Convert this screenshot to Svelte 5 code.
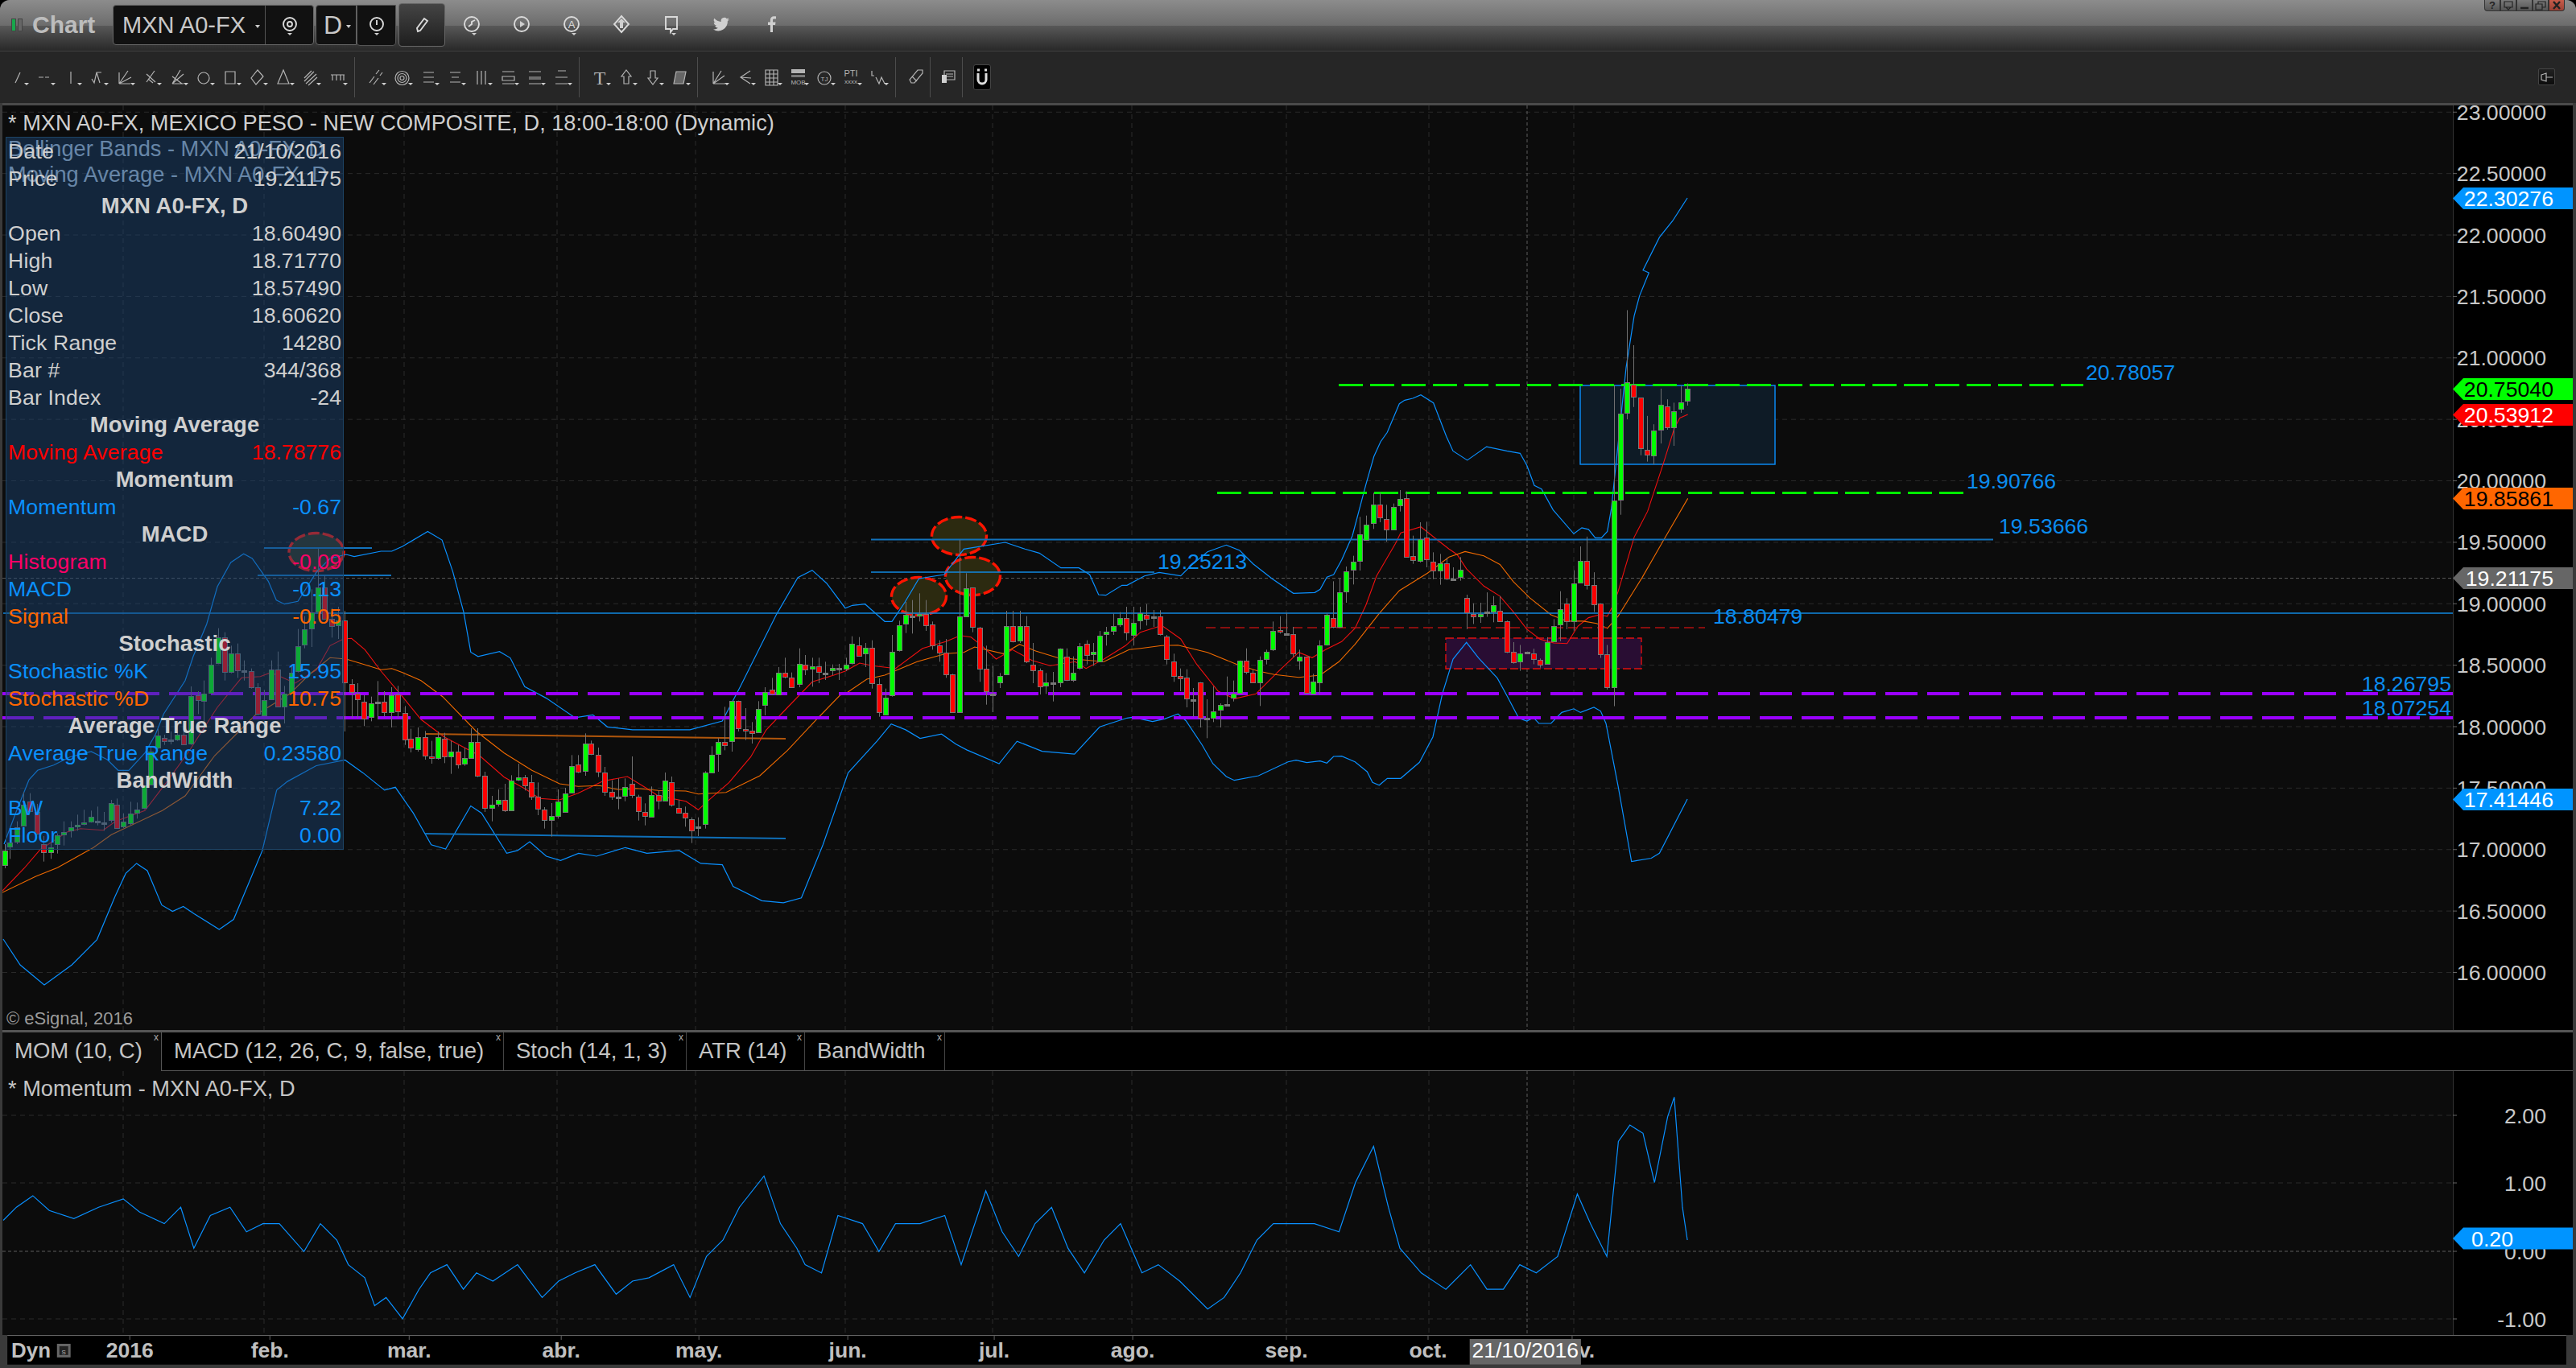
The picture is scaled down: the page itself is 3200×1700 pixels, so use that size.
<script>
  // zoom crops were read as x0, sx, y0, sy -> page pixels
  const maps = {
    a: [0, 1, 0, 1],
    o: [0, 0.48995, 0, 0.48995],
    z3: [0, 3, 560, 3],
    z4: [1800, 3, 340, 2.8],
    z9: [1050, 2.24, 600, 3],
    z10: [500, 2.613, 820, 3],
    z11: [0, 1.12, 640, 2.8],
    z12: [1400, 3, 480, 3]
  };
  const mx = (k, x) => maps[k][0] + x / maps[k][1];
  const my = (k, y) => maps[k][2] + y / maps[k][3];

  function line(...segs) {
    const out = [];
    for (const [k, s] of segs) {
      for (const p of s.trim().split(/\s+/)) {
        const [x, y] = p.split(",").map(Number);
        out.push(mx(k, x).toFixed(1) + "," + my(k, y).toFixed(1));
      }
    }
    return out.join(" ");
  }

  const upper = line(
    ["z3", "15,1470 60,1350 108,1230 140,1195 200,1175 260,1145 340,1125 400,1155 440,1195 480,1195 540,1130 580,1060 610,985 690,860 720,770 770,650 810,510 860,420 908,388 940,405 1000,490 1030,560 1060,575 1110,565 1180,455 1230,405 1290,390 1320,398 1420,378 1460,378 1500,360"],
    ["z11", "595,60 615,90 630,200 645,340 655,480 665,495 695,478 710,500 730,600 760,640 800,708 825,698 845,740 880,750 960,750 1005,720 1030,600 1080,350 1110,220 1130,195 1150,240"],
    ["z9", "0,470 20,460 55,455 110,520 130,520 165,450 205,360 275,345 330,250 445,225 500,250 540,265 600,320 650,320 680,345 705,420 725,422 770,385"],
    ["z12", "0,745 65,710 120,697 200,710 240,670 300,620 370,595 420,615 470,665 540,720 620,775 700,772 720,760 745,715 770,705 800,650 840,560 890,370 920,265 945,210 970,175 1015,68 1035,55 1065,48 1095,35 1142,65 1190,190"],
    ["z4", "15,620 68,652 140,605 215,620 265,628 290,670 318,740 345,752 388,825 465,908 495,887 520,893 545,922 568,922 590,900 605,820 660,330 690,150 710,80 745,0"],
    ["o", "1000,165 1010,145 1018,135 1027,121"]
  );

  const lower = line(
    ["a", "4,1168 25,1200 55,1225"],
    ["z11", "100,1568 135,1480 160,1330 175,1250 190,1215 205,1240 225,1360 240,1382 255,1365 270,1390 305,1445 325,1410 350,1260 365,1170 385,960 400,930 440,875 480,855 505,900 535,960 550,950 575,1040 600,1150 620,1165 655,1015 670,1040 705,1180 720,1170 737,1140 760,1190 780,1205 805,1180 830,1190 870,1160 900,1180 945,1170 975,1215 1005,1220 1020,1295 1060,1345 1090,1352 1115,1335 1145,1150 1180,900 1220,790 1240,730 1260,750 1280,780 1310,765 1330,800 1345,820 1390,868 1415,790 1450,825 1495,835 1530,740"],
    ["z12", "0,1240 20,1237 95,1253 140,1243 190,1225 220,1250 280,1340 320,1410 370,1458 400,1472 490,1455 600,1403 630,1397 670,1406 720,1400 745,1408 770,1383 800,1382 850,1403 895,1440 915,1480 940,1490 970,1465 1020,1465 1090,1405 1140,1310 1175,1150 1215,1020 1265,958"],
    ["z4", "110,1340 180,1410 215,1470 260,1550 290,1560 315,1548 335,1568 380,1568 420,1530 465,1517 490,1530 540,1512 565,1525 585,1568"],
    ["o", "985,480 993,525 1005,523 1010,520 1027,487"]
  );

  const maRed = line(
    ["a", "3,1108"],
    ["z3", "90,1560 150,1490 250,1425 300,1412 385,1418 430,1385 540,1345 620,1240 700,1130 810,960 900,850 970,845 1010,830 1100,870 1180,820 1230,730 1280,705 1310,703 1360,745 1420,825 1500,920"],
    ["z10", "60,225 135,290 250,360 330,440 400,485 445,520 510,525 570,500 650,455 730,438 790,480 830,510 920,530 960,562 1000,520 1060,460 1130,365 1180,265 1250,180 1330,85 1400,60"],
    ["z9", "0,705 40,675 75,685 140,695 215,620 280,595 320,572 350,578 380,610 420,660 465,625 520,665 570,685 640,670 670,695 720,660 780,610"],
    ["z12", "50,920 130,895 200,945 260,1040 340,1140 400,1168 480,1150 560,1070 640,995 690,1015 740,985 800,955 850,905 890,820 930,710 1000,590 1020,550 1095,527 1200,610"],
    ["z4", "30,980 65,1030 130,1090 190,1125 240,1180 290,1240 340,1275 390,1288 440,1290 480,1230 520,1200 560,1190 590,1195 610,1160 630,1110 690,920 740,830 800,660 840,540 860,505 890,493"]
  );

  const maOrange = line(
    ["a", "3,1110"],
    ["z11", "50,1260 80,1230 130,1160"],
    ["z3", "415,1435 605,1345 690,1290 800,1140 950,990 1080,910 1150,840 1230,775 1290,780 1340,795 1420,820 1460,815 1500,830"],
    ["z10", "60,80 130,140 240,270 330,350 420,415 510,465 570,475 640,472 700,487 760,482 830,490 920,492 960,503 1050,497 1160,435 1250,340 1340,230 1420,135"],
    ["z9", "0,790 60,735 110,720 200,670 280,640 330,635 360,615 440,640 485,605 530,630 590,655 720,670 790,625"],
    ["z12", "50,980 130,970 190,968 300,995 410,1040 490,1065 550,1078 640,1088 720,1080 790,1030 850,965 940,850 1015,765 1120,700 1200,640"],
    ["z4", "60,970 130,985 190,1015 240,1075 300,1130 380,1190 440,1212 500,1212 550,1220 590,1237 630,1195 720,1060 800,930 890,785"]
  );

  const momentum = line(["o", "2,743 10,735 20,728 30,737 45,742 60,735 75,730 85,738 100,745 110,735 118,760 128,740 140,735 150,750 160,745 170,745 185,762 195,745 205,755 212,770 222,778 228,795 235,790 245,803 255,785 262,775 272,770 282,785 290,775 300,780 315,770 330,790 340,780 350,775 362,770 375,788 385,780 395,778 410,770 420,790 430,765 440,755 450,735 465,716 475,745 485,760 490,770 500,775 510,740 525,745 535,762 545,745 560,745 575,740 585,770 600,725 610,750 620,765 630,745 640,735 650,760 660,775 672,755 682,745 695,775 705,770 718,780 735,797 745,790 755,775 765,755 775,745 785,745 800,745 815,750 825,720 836,698 845,735 852,760 865,775 880,785 895,770 905,785 915,785 925,770 935,775 948,765 960,727 968,745 978,765 985,695 992,685 1000,690 1007,720 1015,680 1019,668 1024,735 1027,755"]);

  // candle rows: x top bottom high low colour, in crop units
  const rows = [
    ["z3", `17 1495 1548 1470 1560 g;37 1465 1480 1455 1525 g;63 1408 1463 1385 1470 g;88 1322 1400 1275 1405 g;112 1312 1348 1280 1350 r;137 1350 1430 1320 1435 r;163 1470 1500 1440 1535 r;188 1482 1500 1465 1525 g;212 1437 1470 1430 1505 g;238 1424 1432 1385 1475 g;263 1408 1420 1385 1445 g;288 1398 1404 1360 1420 g;313 1390 1396 1342 1400 g;338 1367 1386 1345 1390 g;362 1382 1385 1330 1400 d;387 1388 1391 1350 1420 d;413 1318 1382 1305 1390 g;436 1322 1408 1300 1412 r;460 1387 1405 1355 1410 g;487 1355 1390 1312 1400 g;511 1340 1352 1315 1375 g;536 1252 1336 1250 1340 g;562 1125 1248 1105 1250 g;587 1065 1110 1040 1115 g;611 1075 1087 1062 1100 r;636 1080 1083 1050 1098 d;661 1062 1080 1030 1085 g;685 1062 1098 1030 1100 r;710 918 1096 882 1100 g;737 916 934 900 985 r;760 908 936 860 1020 g;785 800 906 775 908 g;812 700 797 665 799 g;836 700 828 680 860 r;860 760 828 730 833 g;884 760 822 722 850 r;910 822 825 785 860 d;935 825 886 815 890 r;960 886 985 870 990 r;985 932 990 895 993 g;1010 818 930 785 932 g;1034 818 955 752 960 r;1060 908 955 880 1020 g;1085 830 906 800 910 g;1109 732 826 668 830 g;1133 668 726 620 740 g;1160 605 664 520 735 g;1185 512 603 368 610 g;1209 512 628 470 630 r;1235 630 657 590 700 r;1260 636 655 585 705 g;1285 635 865 600 1050 r;1310 872 903 855 1000 r;1333 908 930 870 1000 r;1357 938 1000 915 1030 r;1384 944 995 920 1012 g;1408 940 943 862 1005 d;1432 940 978 900 995 r;1457 914 976 885 1035 g;1482 912 975 880 1000 r`],
    ["z10", `7 200 300 175 320 r;27 298 332 260 348 r;50 292 338 255 345 g;72 292 362 268 375 r;93 364 370 305 390 r;116 292 370 270 375 g;137 296 362 275 388 r;158 344 362 305 428 g;179 344 392 320 408 r;202 370 392 330 398 g;223 308 368 258 372 g;244 308 434 258 440 r;267 436 557 420 570 r;289 542 553 510 605 g;310 526 542 486 550 g;333 526 564 465 570 r;354 452 563 433 563 g;375 442 452 390 455 g;396 442 472 432 490 r;419 460 514 432 525 r;440 514 559 460 582 r;461 562 601 552 632 r;484 584 598 537 662 g;505 532 586 486 595 g;527 500 568 480 570 g;550 398 497 358 498 g;570 394 421 358 425 r;592 314 417 277 435 g;612 314 352 304 358 r;636 358 420 330 440 r;657 422 493 402 510 r;679 494 511 452 525 r;701 514 517 445 560 d;722 478 510 445 530 g;744 466 508 363 518 r;766 514 568 506 602 r;787 571 587 538 620 r;808 508 589 475 590 g;830 508 528 490 560 r;852 452 526 423 527 g;874 460 544 438 550 r;895 554 571 525 572 r;918 574 592 550 625 r;939 596 637 590 686 r;960 625 628 590 660 d;983 424 616 418 632 g;1004 358 424 325 425 g;1025 310 355 295 420 g;1046 310 322 178 340 r;1070 157 306 157 345 g;1090 157 260 155 270 r;1112 260 265 183 302 r;1134 268 277 235 315 r;1156 187 274 157 275 g;1177 122 169 105 210 g;1200 115 130 70 135 r;1221 50 130 30 132 g;1242 50 64 -5 72 r;1263 68 103 50 105 r;1287 18 94 -40 105 g;1307 20 37 -15 60 r;1329 28 37 -5 103 g;1351 28 48 -5 90 r;1373 52 55 10 78 d;1396 34 44 20 60 g;1417 34 37 18 78 d;1439 20 34 -5 45 g`],
    ["z9", `18 604 676 575 680 g;37 608 646 578 650 r;57 617 637 600 690 g;75 617 748 590 770 r;93 752 856 732 875 r;113 803 865 770 870 g;131 632 795 570 800 g;149 533 625 517 632 g;169 496 529 447 563 g;187 498 502 440 565 d;205 491 496 415 520 g;225 491 532 440 555 r;243 530 607 520 625 r;261 608 634 590 670 r;279 635 715 585 730 r;299 718 858 715 860 r;317 500 858 215 860 g;335 395 500 340 503 g;354 394 540 394 560 r;373 542 694 540 745 r;391 695 780 610 830 r;411 790 793 685 858 d;429 724 748 712 768 g;447 538 718 480 720 g;465 536 592 480 598 r;485 538 592 480 600 g;503 538 670 500 675 r;521 680 700 600 750 r;541 703 762 695 792 r;558 748 760 712 790 g;577 748 751 708 818 d;597 622 748 620 765 g;615 650 738 620 742 r;633 710 736 650 745 g;651 612 694 600 700 g;671 604 646 590 680 r;689 634 644 600 685 g;707 572 667 555 670 g;726 559 568 540 610 g;745 538 556 490 570 g;764 508 532 485 540 g;782 508 562 465 590 r;801 524 568 465 610 g;819 490 516 465 550 g;837 494 508 455 535 r;857 500 505 477 540 d;875 500 565 478 572 r;893 575 660 570 680 r;913 668 722 640 745 r;931 722 730 695 780 r;949 730 808 698 840 r;968 811 815 768 875 d;987 746 878 746 915 r;1005 878 881 810 955 d;1023 854 877 762 895 g;1043 832 850 825 915 g;1061 828 832 725 830 d;1079 788 803 740 818 g;1098 665 785 665 790 g;1116 665 706 620 716 r;1134 710 745 700 750 r;1154 662 745 650 835 g;1172 632 658 625 680 g;1190 555 625 520 630 g;1209 551 558 500 565 r;1228 563 567 488 570 d;1246 566 637 540 652 r;1264 652 667 625 700 g;1284 652 788 650 790 r;1302 745 790 715 792 g;1320 608 745 590 790 g;1340 494 605 490 610 g;1358 508 542 370 545 r;1376 410 540 360 545 g;1394 332 406 315 450 g;1414 298 328 275 382 g;1432 196 295 130 330 g;1450 158 214 125 215 g;1470 85 155 40 175 g;1488 85 132 40 150 r;1506 137 176 85 222 r;1526 92 176 80 178 g;1544 62 85 30 110 g`],
    ["z12", `1042 419 637 395 640 r;1066 637 652 560 665 r;1093 572 652 510 660 g;1117 568 648 508 678 r;1141 658 690 622 722 r;1168 664 692 628 743 g;1192 662 720 642 725 r;1216 719 722 678 722 d;1243 688 716 640 728 g`],
    ["z4", `67 1132 1183 1120 1240 r;91 1186 1195 1150 1222 r;118 1187 1195 1148 1218 g;142 1180 1183 1112 1197 d;166 1155 1178 1125 1216 g;190 1175 1210 1125 1215 r;217 1213 1318 1210 1323 r;241 1320 1356 1285 1360 r;265 1323 1352 1295 1385 g;290 1320 1323 1318 1326 d;316 1323 1342 1308 1362 r;340 1346 1364 1342 1374 r;367 1285 1360 1268 1362 g;391 1228 1281 1205 1282 g;415 1170 1224 1108 1282 g;439 1150 1212 1132 1240 r;466 1080 1212 1035 1245 g;490 1001 1076 952 1078 g;514 1001 1084 918 1102 r;541 1086 1154 1042 1180 r;565 1150 1325 1150 1340 r;589 1328 1443 1295 1450 r;616 793 1443 390 1508 g;640 491 790 403 842 g;664 380 485 130 510 g;688 390 432 252 467 r;715 435 610 435 635 r;739 615 631 498 657 r;763 548 634 527 667 g;790 458 544 403 594 g;814 466 538 440 546 r;838 481 538 452 602 g;865 450 471 392 487 g;889 404 446 385 462 g`]
  ];

  const candles = [];
  for (const [k, s] of rows) {
    for (const row of s.split(";")) {
      const [x, t, b, h, l, c] = row.trim().split(" ");
      const cx = Math.round(mx(k, +x)) + 0.5;
      const top = my(k, +t), bot = my(k, +b);
      candles.push({
        cx, top: Math.round(top) + 0.5, h: Math.max(2, Math.round(bot - top)),
        hi: my(k, Math.min(+h, +t)), lo: my(k, Math.max(+l, +b)), c
      });
    }
  }

  const priceY = (p) => 904 - (p - 18) * 152.74;
  const prices = [23, 22.5, 22, 21.5, 21, 20.5, 20, 19.5, 19, 18.5, 18, 17.5, 17, 16.5, 16];
  const vGrid = [153, 328, 502, 692, 864, 1050, 1233, 1406, 1598, 1775, 1955];
  const months = [
    ["2016", 153], ["feb.", 328], ["mar.", 502], ["abr.", 692], ["may.", 864], ["jun.", 1050],
    ["jul.", 1233], ["ago.", 1406], ["sep.", 1598], ["oct.", 1775], ["nov.", 1957]
  ];
  const tags = [
    { t: "22.30276", y: 247.5, bg: "#0094ff", fg: "#fff" },
    { t: "20.75040", y: 484.5, bg: "#00ff00", fg: "#000" },
    { t: "20.53912", y: 516.5, bg: "#ff0000", fg: "#fff" },
    { t: "19.85861", y: 620.5, bg: "#ff6600", fg: "#000" },
    { t: "19.21175", y: 719.5, bg: "#666666", fg: "#fff" },
    { t: "17.41446", y: 994.5, bg: "#0094ff", fg: "#fff" }
  ];
  const levels = [
    { t: "20.78057", x: 2591, y: 473 },
    { t: "19.90766", x: 2443, y: 608 },
    { t: "19.53666", x: 2483, y: 664 },
    { t: "19.25213", x: 1438, y: 708 },
    { t: "18.80479", x: 2128, y: 776 }
  ];
  const ellipses = [[1141.5, 742], [1208.5, 717], [1191.5, 667], [393, 687]];

  const infoRows = [
    { l: "Date", r: "21/10/2016" }, { l: "Price", r: "19.21175" }, { h: "MXN A0-FX, D" },
    { l: "Open", r: "18.60490" }, { l: "High", r: "18.71770" }, { l: "Low", r: "18.57490" },
    { l: "Close", r: "18.60620" }, { l: "Tick Range", r: "14280" }, { l: "Bar #", r: "344/368" },
    { l: "Bar Index", r: "-24" }, { h: "Moving Average" },
    { l: "Moving Average", r: "18.78776", c: "red" }, { h: "Momentum" },
    { l: "Momentum", r: "-0.67", c: "blue" }, { h: "MACD" },
    { l: "Histogram", r: "-0.09", c: "pink" }, { l: "MACD", r: "-0.13", c: "blue" },
    { l: "Signal", r: "-0.05", c: "orange" }, { h: "Stochastic" },
    { l: "Stochastic %K", r: "15.95", c: "blue" }, { l: "Stochastic %D", r: "10.75", c: "orange" },
    { h: "Average True Range" }, { l: "Average True Range", r: "0.23580", c: "blue" },
    { h: "BandWidth" }, { l: "BW", r: "7.22", c: "blue" }, { l: "Floor", r: "0.00", c: "blue" }
  ];

  const tabs = [
    { t: "MOM (10, C)", w: 198, on: true },
    { t: "MACD (12, 26, C, 9, false, true)", w: 425 },
    { t: "Stoch (14, 1, 3)", w: 227 },
    { t: "ATR (14)", w: 147 },
    { t: "BandWidth", w: 174 }
  ];

  // drawing tools, paths in a 22x24 box
  const groups = [
    [
      "M7 19L13 6", "M3 12H9M11 12H16", "M10 5V20", "M3 14L6 19L9 6H15M9 6L13 19",
      "M4 20L15 4M4 20L19 12M4 20H18M4 20V6", "M5 18L15 4M5 8L16 18M7 14L13 19",
      "M4 20L14 3M4 20L18 8M4 20H18M4 11L16 20", "M3 13a7 7 0 1 0 14 0a7 7 0 1 0 -14 0",
      "M4 5H16V20H4Z", "M11 3L18 11L9 21L3 13Z", "M10 3L17 20H3Z",
      "M3 17L15 5M5 20L18 8M3 13L12 4M8 22L19 12", "M3 9H20M5 9V16M10 9V16M15 9V16M19 9V16"
    ],
    [
      "M3 19L9 11M11 8L15 3M8 21L14 13M16 10L19 6",
      "M2 13a8.5 8.5 0 1 0 17 0a8.5 8.5 0 1 0 -17 0M5 13a5.5 5.5 0 1 0 11 0a5.5 5.5 0 1 0 -11 0M8 13a2.5 2.5 0 1 0 5 0a2.5 2.5 0 1 0 -5 0",
      "M4 6H17M4 12H17M4 18H17", "M4 6H17M6 12H15M4 18H17", "M5 4V21M10 4V21M15 4V21",
      "M3 5H18M3 11H18V16H3ZM3 20H18", "M3 5H18M3 12H18M3 14H18M3 20H18", "M6 4H16M3 12H18M3 20H18"
    ],
    ["T", "M10 3L16 11H13V20H7V11H4Z", "M7 4H13V13H16L10 21L4 13H7Z", "M6 5H18L15 20H3Z"],
    [
      "M4 20L14 4M4 20L18 10M4 20H19M4 20V5", "M17 4L5 12L17 20M5 12L18 13", "M3 3H18V22H3ZM3 8H18M3 13H18M3 18H18M8 3V22M13 3V22",
      "", "", "", "M3 4V10H6M8 12L12 20L15 12L19 20"
    ]
  ];
  const topIcons = ["chart", "play", "alert", "swap", "chat", "bird", "fb"];
</script>

<div class="win">
  <div class="title">
    <div class="leds"><i class="led on"></i><i class="led"></i></div>
    <div class="app">Chart</div>
    <div class="symbol">
      <div class="sym-name">MXN A0-FX<i class="tri"></i></div>
      <div class="sym-btn">
        <svg width="26" height="28" viewBox="0 0 26 28"><circle cx="13" cy="13" r="8" class="ic hi"/><circle cx="13" cy="13" r="3" class="ic hi"/><path d="M10 24h6l-3 3z" class="fill"/></svg>
      </div>
    </div>
    <div class="interval">D<i class="tri"></i></div>
    <div class="clock">
      <svg width="26" height="28" viewBox="0 0 26 28"><circle cx="13" cy="13" r="8" class="ic hi"/><path d="M13 8V14" class="ic hi"/><path d="M10 24h6l-3 3z" class="fill"/></svg>
    </div>
    <div class="pencil">
      <svg width="26" height="28" viewBox="0 0 26 28"><path d="M8 22L7 18L16 6L20 9L11 21Z" class="ic hi"/></svg>
    </div>
    {#each topIcons as ic}
      <div class="top-ic">
        <svg width="28" height="30" viewBox="0 0 28 30">
          {#if ic === "chart"}
            <circle cx="14" cy="14" r="9" class="ic hi"/><path d="M10 17L14 14L14 11L18 9" class="ic hi"/><path d="M14 25h6l-3 3z" class="fill"/>
          {:else if ic === "play"}
            <circle cx="14" cy="14" r="9" class="ic hi"/><path d="M12 10L18 14L12 18Z" class="fill"/>
          {:else if ic === "alert"}
            <circle cx="14" cy="14" r="9" class="ic hi"/><text x="14" y="19" class="ic-t">A</text><path d="M14 25h6l-3 3z" class="fill"/>
          {:else if ic === "swap"}
            <path d="M14 4L23 14L14 24L5 14Z" class="ic hi"/><path d="M14 7L19 12H16V19H12V12H9Z" class="fill"/>
          {:else if ic === "chat"}
            <path d="M7 5H21V20H16L13 24V20H7Z" class="ic hi"/><path d="M14 25h6l-3 3z" class="fill"/>
          {:else if ic === "bird"}
            <path transform="translate(2 2)" d="M22 5.9c-.7.3-1.5.5-2.4.6.9-.5 1.5-1.3 1.8-2.3-.8.5-1.7.8-2.6 1a4.1 4.1 0 0 0-7 3.7A11.6 11.6 0 0 1 3.4 4.7a4.1 4.1 0 0 0 1.3 5.5c-.7 0-1.3-.2-1.9-.5 0 2 1.4 3.7 3.3 4.1-.6.2-1.2.2-1.9.1.5 1.6 2 2.8 3.8 2.8A8.2 8.2 0 0 1 2 18.4a11.6 11.6 0 0 0 17.9-10.3c.8-.6 1.5-1.3 2.1-2.2z" class="fill"/>
          {:else}
            <path transform="translate(2 2)" d="M14 22v-9h3l.5-3.5H14V7.3c0-1 .3-1.7 1.8-1.7H18V2.4C17.6 2.4 16.5 2.3 15.3 2.3c-2.6 0-4.4 1.6-4.4 4.5v2.7H8V13h2.9v9z" class="fill"/>
          {/if}
        </svg>
      </div>
    {/each}
    <div class="caption">
      <span class="cap">?</span>
      <span class="cap"><svg width="14" height="12" viewBox="0 0 14 12"><path d="M2 1H12V8H2ZM7 11L4 8H10Z" class="dk"/></svg></span>
      <span class="cap"><svg width="14" height="12" viewBox="0 0 14 12"><path d="M2 9H12" class="dk thick"/></svg></span>
      <span class="cap"><svg width="14" height="12" viewBox="0 0 14 12"><path d="M1 4H9V11H1ZM4 4V1H13V8H9" class="dk"/></svg></span>
      <span class="cap close"><svg width="14" height="12" viewBox="0 0 14 12"><path d="M3 1L11 10M11 1L3 10" class="dk thick"/></svg></span>
    </div>
  </div>

  <div class="tools">
    {#each groups as group, g}
      {#each group as d, i}
        <div class="tool">
          <svg width="33" height="30" viewBox="0 0 33 30">
            <g transform="translate(6 3)">
              {#if g === 3 && i === 3}
                <rect x="2" y="2" width="17" height="5" class="solid"/><rect x="2" y="9" width="17" height="3" class="solid dim"/>
                <text x="10.5" y="21" class="mini">MOB</text>
              {:else if g === 3 && i === 4}
                <circle cx="10" cy="13" r="8" class="ic"/><text x="10" y="16.5" class="mini">TJ</text>
              {:else if g === 3 && i === 5}
                <text x="10" y="11" class="mini big">PTI</text><text x="10" y="20" class="mini">xxxx</text>
              {:else if d === "T"}
                <text x="10" y="21" class="letter">T</text>
              {:else}
                <path d={d} class:band={g === 2 && i === 3} class="ic"/>
              {/if}
            </g>
            <path d="M24 22h6l-3 3z" class="fill"/>
          </svg>
        </div>
      {/each}
      <i class="sep"></i>
    {/each}
    <div class="tool">
      <svg width="33" height="30" viewBox="0 0 33 30"><path d="M10 22L8 18L18 6H24L24 10L14 22ZM11 14L17 20" class="ic"/></svg>
    </div>
    <i class="sep tight"></i>
    <div class="tool">
      <svg width="33" height="30" viewBox="0 0 33 30"><path d="M11 7H24V18H11ZM13 11H22M13 14H22" class="ic"/><path d="M8 12H14V22H8Z" class="fill"/></svg>
    </div>
    <i class="sep tight"></i>
    <div class="magnet"><svg width="18" height="24" viewBox="0 0 18 24"><path d="M4 7V15a5 5 0 0 0 10 0V7" class="mag"/><path d="M3 3H6M12 3H15" class="mag"/></svg></div>
    <div class="pin">
      <svg width="18" height="18" viewBox="0 0 18 18"><path d="M2 6L8 4V14L2 12ZM8 9H16" class="ic"/></svg>
    </div>
  </div>
  <div class="rule"></div>

  <div class="row main">
    <div class="plot">
      <svg class="block" width="3044" height="1149" viewBox="3 132 3044 1149">
        {#each prices as p}
          <line x1="3" x2="3047" y1={priceY(p)} y2={priceY(p)} class="grid"/>
        {/each}
        {#each vGrid as x}
          <line x1={x} x2={x} y1="132" y2="1281" class="grid"/>
        {/each}
        <line x1="1897" x2="1897" y1="132" y2="1281" class="cross"/>
        <line x1="3" x2="3047" y1="719.6" y2="719.6" class="cross"/>

        <rect x="1963" y="480" width="242" height="98" class="box-blue"/>
        <rect x="1796" y="794" width="243" height="38" class="box-red"/>
        {#each ellipses as [cx, cy]}
          <ellipse {cx} {cy} rx="34" ry="23.5" class="oval"/>
        {/each}

        <polyline points={upper} class="bb"/>
        <polyline points={lower} class="bb"/>
        <polyline points={maRed} class="ma-r"/>
        <polyline points={maOrange} class="ma-o"/>

        <line x1="4" x2="3047" y1="763" y2="763" class="lvl"/>
        <line x1="1082" x2="2476" y1="671.5" y2="671.5" class="lvl2"/>
        <line x1="1082" x2="1434" y1="712" y2="712" class="lvl"/>
        <line x1="328" x2="462" y1="682" y2="682" class="lvl2"/>
        <line x1="320" x2="486" y1="716" y2="716" class="lvl2"/>
        <line x1="528" x2="976" y1="913" y2="919" class="trend-o"/>
        <line x1="528" x2="976" y1="1037" y2="1043" class="trend-b"/>
        <line x1="1498" x2="2118" y1="781" y2="781" class="red-dash"/>
        <line x1="1663" x2="2588" y1="479.5" y2="479.5" class="green-dash"/>
        <line x1="1512" x2="2439" y1="613.5" y2="613.5" class="green-dash"/>
        <line x1="2" x2="3047" y1="863" y2="863" class="purple"/>
        <line x1="2" x2="3047" y1="893" y2="893" class="purple"/>

        {#each candles as k}
          <line x1={k.cx} x2={k.cx} y1={k.hi} y2={k.lo} class="wick"/>
          <rect x={k.cx - 3} y={k.top} width="6" height={k.h} class="body {k.c}"/>
        {/each}

        {#each levels as l}
          <text x={l.x} y={l.y} class="lbl-b">{l.t}</text>
        {/each}
        <text x="3045" y="860" class="lbl-b end">18.26795</text>
        <text x="3045" y="890" class="lbl-b end">18.07254</text>
        <text x="8" y="1274" class="copy">© eSignal, 2016</text>
      </svg>

      <div class="legend">
        <div class="leg">* MXN A0-FX, MEXICO PESO - NEW COMPOSITE, D, 18:00-18:00 (Dynamic)</div>
        <div class="leg dimmed">Bollinger Bands - MXN A0-FX, D</div>
        <div class="leg dimmed">Moving Average - MXN A0-FX, D</div>
      </div>

      <div class="info">
        {#each infoRows as r}
          {#if r.h}
            <div class="info-h">{r.h}</div>
          {:else}
            <div class="info-r {r.c || ''}"><span class="lab">{r.l}</span><span>{r.r}</span></div>
          {/if}
        {/each}
      </div>
    </div>

    <svg class="block axis" width="149" height="1149" viewBox="3047 132 149 1149">
      <line x1="3047" x2="3047" y1="132" y2="1281" class="ax"/>
      {#each prices as p}
        <line x1="3047" x2="3052" y1={priceY(p)} y2={priceY(p)} class="ax"/>
        <text x="3163" y={priceY(p) + 9.5} class="ax-t">{p.toFixed(5)}</text>
      {/each}
      {#each tags as t}
        <polygon points="3047,{t.y} 3060,{t.y - 13.5} 3196,{t.y - 13.5} 3196,{t.y + 13.5} 3060,{t.y + 13.5}" fill={t.bg}/>
        <text x="3172" y={t.y + 9.5} class="ax-t" style="fill:{t.fg}">{t.t}</text>
      {/each}
    </svg>
  </div>

  <div class="tabs">
    {#each tabs as t}
      <div class="tab" class:on={t.on} style="width:{t.w}px"><span>{t.t}</span><b>x</b></div>
    {/each}
  </div>

  <div class="row lower">
    <svg class="block" width="3044" height="328" viewBox="3 1331 3044 328">
      {#each [1386, 1470, 1639] as y}
        <line x1="3" x2="3047" y1={y} y2={y} class="grid"/>
      {/each}
      <line x1="3" x2="3047" y1="1555" y2="1555" class="cross"/>
      {#each vGrid as x}
        <line x1={x} x2={x} y1="1331" y2="1659" class="grid"/>
      {/each}
      <line x1="1897" x2="1897" y1="1331" y2="1659" class="cross"/>
      <polyline points={momentum} class="bb"/>
      <text x="10" y="1362" class="leg-t">* Momentum - MXN A0-FX, D</text>
    </svg>
    <svg class="block axis" width="149" height="328" viewBox="3047 1331 149 328">
      <line x1="3047" x2="3047" y1="1331" y2="1659" class="ax"/>
      {#each [[1386, "2.00"], [1470, "1.00"], [1555, "0.00"], [1639, "-1.00"]] as [y, t]}
        <line x1="3047" x2="3052" y1={y} y2={y} class="ax"/>
        <text x="3163" y={y + 9.5} class="ax-t">{t}</text>
      {/each}
      <polygon points="3047,1539 3060,1525.5 3196,1525.5 3196,1552.5 3060,1552.5" fill="#0094ff"/>
      <text x="3122" y="1548.5" class="ax-t" style="fill:#fff">0.20</text>
    </svg>
  </div>

  <svg class="block time" width="3197" height="41" viewBox="0 1659 3197 41">
    <rect x="0" y="1659" width="3197" height="37" fill="#000"/>
    <line x1="0" x2="3197" y1="1659.5" y2="1659.5" class="ax"/>
    {#each vGrid as x}
      <line x1={x} x2={x} y1="1660" y2="1665" class="ax"/>
    {/each}
    <text x="5" y="1687" class="tm start">Dyn</text>
    <rect x="62" y="1670" width="17" height="17" fill="#666"/>
    <rect x="65" y="1673" width="11" height="11" fill="#222"/>
    <text x="70.5" y="1683" class="mini">S</text>
    {#each months as [t, x]}
      <text {x} y="1687" class="tm">{t}</text>
    {/each}
    <rect x="1827" y="1664" width="139" height="32" fill="#666"/>
    <text x="1896.5" y="1687" class="tm date">21/10/2016</text>
  </svg>
</div>

<style>
  :global(body) {
    margin: 0;
    background: #000;
    font-family: "Liberation Sans", Arial, sans-serif;
  }
  .win {
    width: 3200px;
    height: 1700px;
    display: flex;
    flex-direction: column;
    background: #3a3a3a;
    border-radius: 12px 12px 0 0;
    overflow: hidden;
    color: #ccc;
    font-size: 26.67px;
  }
  .block { display: block; }

  .title {
    height: 63px;
    display: flex;
    align-items: center;
    padding-left: 14px;
    background: linear-gradient(#8c8c8c 0, #6c6c6c 32px, #585858 32px, #2a2a2a 62px);
    border-bottom: 1px solid #3f3f3f;
  }
  .leds { display: flex; gap: 2px; margin-right: 12px; }
  .led { width: 4px; height: 14px; background: #666; border: 1px solid #444; }
  .led.on { background: #18a84c; }
  .app {
    font-size: 30px;
    font-weight: bold;
    color: #bdbdbd;
    width: 79px;
    margin-right: 21px;
  }
  .symbol {
    display: flex;
    width: 250px;
    height: 50px;
    box-sizing: border-box;
    background: #111;
    border: 1px solid #666;
    border-radius: 4px;
    margin-right: 2px;
  }
  .sym-name {
    width: 189px;
    box-sizing: border-box;
    padding-left: 11px;
    border-right: 1px solid #555;
    font-size: 29px;
    color: #c8c8c8;
    line-height: 48px;
    position: relative;
  }
  .sym-btn, .clock, .pencil { display: flex; align-items: center; justify-content: center; }
  .sym-btn { flex: 1; }
  .tri {
    position: absolute;
    right: 6px;
    top: 24px;
    border: 3px solid transparent;
    border-top: 4px solid #ccc;
  }
  .interval {
    width: 51px;
    height: 50px;
    box-sizing: border-box;
    background: #111;
    border: 1px solid #666;
    border-radius: 4px 0 0 4px;
    font-size: 32px;
    line-height: 48px;
    padding-left: 9px;
    color: #c8c8c8;
    position: relative;
  }
  .clock {
    width: 49px;
    height: 51px;
    box-sizing: border-box;
    background: #111;
    border: 1px solid #555;
    border-radius: 0 0 4px 4px;
    margin-right: 3px;
  }
  .pencil {
    width: 58px;
    height: 54px;
    box-sizing: border-box;
    background: linear-gradient(#444, #1e1e1e);
    border: 1px solid #666;
    border-radius: 4px;
    margin-right: 2px;
  }
  .top-ic { width: 62px; display: flex; justify-content: center; }
  .caption {
    display: flex;
    align-self: flex-start;
    margin-left: auto;
    margin-right: 14px;
  }
  .cap {
    width: 20px;
    height: 14px;
    box-sizing: border-box;
    background: linear-gradient(#7a7a7a, #555);
    border: 1px solid #333;
    border-top: 0;
    font-size: 13px;
    font-weight: bold;
    line-height: 12px;
    text-align: center;
    color: #222;
    display: flex;
    align-items: center;
    justify-content: center;
  }
  .cap:first-child { border-radius: 0 0 0 4px; }
  .close { background: linear-gradient(#c85c4a, #9a4034); border-radius: 0 0 4px 0; }
  .dk { fill: none; stroke: #222; stroke-width: 1.2; }
  .thick { stroke-width: 2.4; }

  .tools {
    height: 65px;
    display: flex;
    align-items: center;
    padding: 0 4px 0 6px;
    background: #262626;
  }
  .tool { width: 33px; height: 30px; flex: none; }
  .sep { width: 1px; height: 50px; background: #4c4c4c; margin: 0 9px 0 5px; flex: none; }
  .sep.tight { margin: 0 6px 0 0; }
  .magnet {
    width: 22px;
    height: 32px;
    margin-left: 7px;
    background: #000;
    border: 1px solid #444;
    border-radius: 3px;
    display: flex;
    align-items: center;
    justify-content: center;
    box-sizing: border-box;
  }
  .pin {
    width: 19px;
    height: 19px;
    margin-left: auto;
    margin-right: 22px;
    background: linear-gradient(#222, #0c0c0c);
    border: 1px solid #444;
    border-radius: 2px;
    display: flex;
    align-items: center;
    justify-content: center;
  }
  .ic { fill: none; stroke: #b4b4b4; stroke-width: 1.2; }
  .ic.hi { stroke: #dadada; stroke-width: 1.9; }
  .ic.band { fill: #666; }
  .fill { fill: #d0d0d0; }
  .solid { fill: #b4b4b4; }
  .solid.dim { fill: #777; }
  .mag { fill: none; stroke: #ddd; stroke-width: 3; }
  .ic-t { font-size: 13px; fill: #dadada; text-anchor: middle; }
  .mini { font-size: 8px; fill: #b4b4b4; text-anchor: middle; }
  .mini.big { font-size: 11px; }
  .letter { font-family: "Liberation Serif", serif; font-size: 24px; fill: #b4b4b4; text-anchor: middle; }

  .rule { height: 3px; background: #4a4a4a; margin: 0 4px 0 3px; }
  .row { display: flex; margin: 0 4px 0 3px; }
  .plot { position: relative; width: 3044px; height: 1149px; background: #0c0c0c; overflow: hidden; }
  .axis { background: #000; }

  .grid { stroke: #2b2b2b; stroke-dasharray: 6 5; stroke-width: 1; }
  .cross { stroke: #5c5c5c; stroke-dasharray: 4 3; stroke-width: 1; }
  .bb { fill: none; stroke: #0a90ff; stroke-width: 1.2; }
  .ma-r { fill: none; stroke: #f01010; stroke-width: 1.1; }
  .ma-o { fill: none; stroke: #f06a00; stroke-width: 1.1; }
  .lvl { stroke: #1088e0; stroke-width: 1.4; }
  .lvl2 { stroke: #1272bc; stroke-width: 2; }
  .trend-o { stroke: #b0560c; stroke-width: 2; }
  .trend-b { stroke: #0f6fb8; stroke-width: 2; }
  .red-dash { stroke: #b01010; stroke-width: 1.4; stroke-dasharray: 12 6; }
  .green-dash { stroke: #00ee00; stroke-width: 3; stroke-dasharray: 30 9; shape-rendering: crispEdges; }
  .purple { stroke: #9a00ff; stroke-width: 4; stroke-dasharray: 40 12; shape-rendering: crispEdges; }
  .box-blue { fill: #0e1b26; stroke: #0a90ff; stroke-width: 1.4; }
  .box-red { fill: #290d33; stroke: #e01010; stroke-width: 1.4; stroke-dasharray: 10 4; }
  .oval { fill: #2c2a10; stroke: #ff1400; stroke-width: 3.4; stroke-dasharray: 14 4; }
  .wick { stroke: #707070; stroke-width: 1; }
  .body { stroke: #777; stroke-width: 1.2; shape-rendering: crispEdges; }
  .body.g { fill: #00ff00; }
  .body.r { fill: #ff0000; }
  .body.d { fill: #777; }
  .lbl-b { font-size: 26.67px; fill: #0a8cf0; }
  .lbl-b.end { text-anchor: end; }
  .copy { font-size: 22px; fill: #9a9a9a; }
  .leg-t { font-size: 27.2px; fill: #c4c4c4; }

  .legend { position: absolute; left: 7px; top: 6px; font-size: 27.2px; }
  .leg { height: 32px; line-height: 32px; white-space: nowrap; color: #cfcfcf; }
  .dimmed { color: #aac0d6; }

  .info {
    position: absolute;
    left: 4px;
    top: 39px;
    width: 420px;
    box-sizing: border-box;
    padding: 0 2px;
    background: rgba(27, 68, 115, 0.465);
    border: 1px solid #1d4466;
  }
  .info-r, .info-h { height: 34px; line-height: 34px; white-space: nowrap; }
  .info-r { display: flex; justify-content: space-between; color: #cfcfcf; }
  .lab { letter-spacing: 0.15px; }
  .info-h { text-align: center; font-weight: bold; font-size: 27.5px; color: #cfcfcf; }
  .info-r.red { color: #ff0000; }
  .info-r.blue { color: #0a90ff; }
  .info-r.pink { color: #ff0066; }
  .info-r.orange { color: #ff6600; }

  .ax { stroke: #666; stroke-width: 1; }
  .ax-t { font-size: 26.67px; fill: #c8c8c8; text-anchor: end; }

  .tabs {
    height: 47px;
    margin: 0 4px 0 3px;
    display: flex;
    background: #000;
    border-top: 3px solid #555;
    border-bottom: 1px solid #555;
  }
  .tab {
    position: relative;
    box-sizing: border-box;
    padding-left: 15px;
    border-right: 1px solid #444;
    line-height: 45px;
    font-size: 27.5px;
    color: #c4c4c4;
    white-space: nowrap;
  }
  .tab b { position: absolute; right: 3px; top: -16px; font-size: 12px; font-weight: normal; color: #aaa; }
  .tab.on {
    background: #0c0c0c;
    height: 48px;
    border-right: 1px solid #555;
  }
  .lower { background: #0c0c0c; }
  .time { background: #3a3a3a; }
  .tm { font-size: 26.67px; font-weight: bold; fill: #c0c0c0; text-anchor: middle; }
  .tm.date { fill: #fff; font-weight: normal; }
  .tm.start { text-anchor: start; font-size: 26px; }
</style>
